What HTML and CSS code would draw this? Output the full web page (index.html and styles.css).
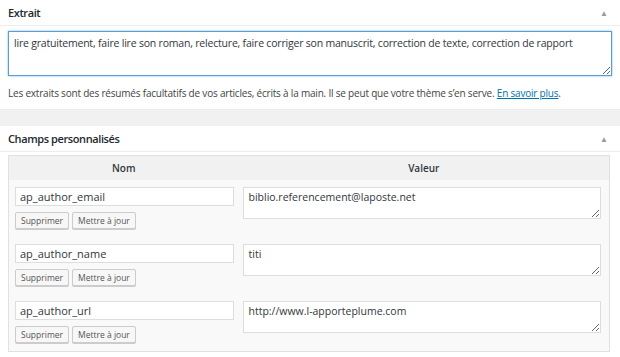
FILE: index.html
```html
<!DOCTYPE html>
<html lang="fr">
<head>
  <meta charset="UTF-8">
  <title>Extrait et champs personnalisés</title>
  <link rel="stylesheet" href="styles.css">
</head>
<body>

<!-- Extrait -->
<div class="postbox">
  <div class="hndle">
    <span>Extrait</span>
    <span class="toggle">&#9650;</span>
  </div>
  <div class="inside">
    <textarea class="excerpt" rows="1">lire gratuitement, faire lire son roman, relecture, faire corriger son manuscrit, correction de texte, correction de rapport</textarea>
    <p class="help">Les extraits sont des résumés facultatifs de vos articles, écrits à la main. Il se peut que votre thème s’en serve. <a href="#">En savoir plus</a>.</p>
  </div>
</div>

<div class="gap"></div>

<!-- Champs personnalisés -->
<div class="postbox">
  <div class="hndle">
    <span>Champs personnalisés</span>
    <span class="toggle">&#9650;</span>
  </div>
  <div class="inside">
    <table class="meta">
      <thead>
        <tr><th class="col-key">Nom</th><th>Valeur</th></tr>
      </thead>
      <tbody>
        <tr>
          <td class="col-key">
            <input type="text" value="ap_author_email">
            <div class="actions"><button>Supprimer</button><button>Mettre à jour</button></div>
          </td>
          <td><textarea rows="2">biblio.referencement@laposte.net</textarea></td>
        </tr>
        <tr>
          <td class="col-key">
            <input type="text" value="ap_author_name">
            <div class="actions"><button>Supprimer</button><button>Mettre à jour</button></div>
          </td>
          <td><textarea rows="2">titi</textarea></td>
        </tr>
        <tr>
          <td class="col-key">
            <input type="text" value="ap_author_url">
            <div class="actions"><button>Supprimer</button><button>Mettre à jour</button></div>
          </td>
          <td><textarea rows="2">http://www.l-apporteplume.com</textarea></td>
        </tr>
      </tbody>
    </table>
  </div>
</div>

</body>
</html>
```

FILE: styles.css
```css
* { margin: 0; padding: 0; box-sizing: border-box; font-family: 'Open Sans', sans-serif; }
body {
  background: #fff;
  color: #444;
  width: 620px;
  overflow: hidden;
}

.postbox { background: #fff; }
.gap { height: 17px; background: #f1f1f1; border-top: 1px solid #ececec; }

.hndle {
  display: flex; justify-content: space-between; align-items: center;
  height: 26px; padding: 0 8px;
  border-bottom: 1px solid #eee;
  font-size: 11px; font-weight: 600; color: #23282d;
  letter-spacing: -0.4px;
}
.toggle { font-size: 8px; color: #999; margin-right: 4px; letter-spacing: 0; }

.inside { padding: 5px 8px 0; }

.excerpt {
  display: block; width: 604px; height: 45px;
  padding: 4px 5px;
  border: 1px solid #5b9dd9;
  box-shadow: 0 0 2px rgba(30, 140, 190, 0.6);
  font-size: 10.5px; letter-spacing: -0.2px; color: #32373c;
  resize: vertical;
}
.help {
  font-size: 10px; letter-spacing: -0.2px; color: #444;
  padding: 10px 0 9px;
}
.help a { color: #0073aa; }

.meta {
  width: 602px;
  margin-top: -2px;
  border: 1px solid #e1e1e1;
  border-collapse: collapse;
  background: #f9f9f9;
}
.meta th {
  height: 24px; background: #f1f1f1;
  font-size: 10px; font-weight: 600; color: #32373c;
}
.meta td { vertical-align: top; padding: 7px 8px 8px 4px; }
.meta .col-key { width: 230px; }
.meta td.col-key { padding-left: 6px; padding-right: 0; }

.meta input[type='text'] {
  display: block; width: 219px; height: 19px;
  padding: 0 4px;
  border: 1px solid #ddd; background: #fff;
  font-size: 11px; color: #32373c;
}
.actions { display: flex; gap: 3px; margin-top: 6px; }
.actions button {
  height: 17px; padding: 0 5px;
  border: 1px solid #ccc; border-radius: 2px;
  background: #f7f7f7; color: #555;
  font-size: 8.5px;
  box-shadow: 0 1px 0 #ccc;
}

.meta td textarea {
  display: block; width: 358px; height: 32px;
  padding: 2px 5px;
  border: 1px solid #ddd; background: #fff;
  font-size: 10.5px; color: #32373c;
  resize: vertical;
}
```
